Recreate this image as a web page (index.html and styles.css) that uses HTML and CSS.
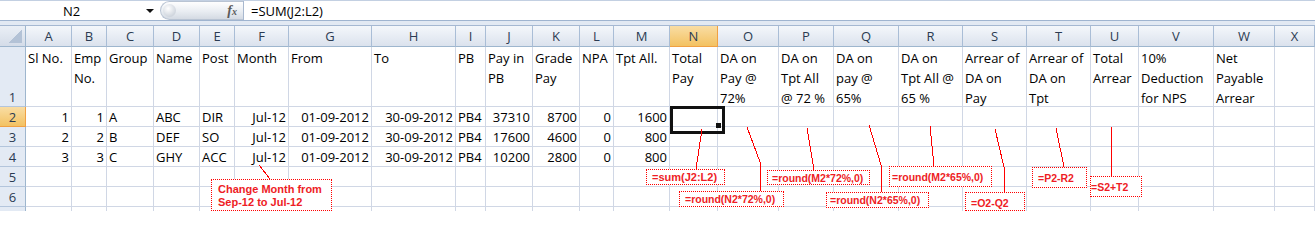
FILE: index.html
```html
<!DOCTYPE html>
<html lang="en">
  <head>
    <meta charset="UTF-8" />
    <title>DA Arrear Sheet</title>
    <link rel="stylesheet" href="styles.css">
  </head>
  <body>
    <div class="excel">
      <div class="fbar">
        <div class="namebox"><span class="nb-text">N2</span><i class="arrow"></i></div>
        <div class="fxbtn"><span class="dot"></span><span class="fx">f<small>x</small></span></div>
        <div class="formula">=SUM(J2:L2)</div>
      </div>
      <div class="band"></div>

      <div class="sheet">
        <!-- column headings -->
        <div class="corner"></div>
        <div class="ch">A</div><div class="ch">B</div><div class="ch">C</div><div class="ch">D</div>
        <div class="ch">E</div><div class="ch">F</div><div class="ch">G</div><div class="ch">H</div>
        <div class="ch">I</div><div class="ch">J</div><div class="ch">K</div><div class="ch">L</div>
        <div class="ch">M</div><div class="ch sel">N</div><div class="ch">O</div><div class="ch">P</div>
        <div class="ch">Q</div><div class="ch">R</div><div class="ch">S</div><div class="ch">T</div>
        <div class="ch">U</div><div class="ch">V</div><div class="ch">W</div><div class="ch">X</div>

        <!-- row 1 -->
        <div class="rh">1</div>
        <div class="hd">Sl No.</div>
        <div class="hd">Emp<br>No.</div>
        <div class="hd">Group</div>
        <div class="hd">Name</div>
        <div class="hd">Post</div>
        <div class="hd">Month</div>
        <div class="hd">From</div>
        <div class="hd">To</div>
        <div class="hd">PB</div>
        <div class="hd">Pay in<br>PB</div>
        <div class="hd">Grade<br>Pay</div>
        <div class="hd">NPA</div>
        <div class="hd">Tpt All.</div>
        <div class="hd">Total<br>Pay</div>
        <div class="hd">DA on<br>Pay @<br>72%</div>
        <div class="hd">DA on<br>Tpt All<br>@ 72 %</div>
        <div class="hd">DA on<br>pay @<br>65%</div>
        <div class="hd">DA on<br>Tpt All @<br>65 %</div>
        <div class="hd">Arrear of<br>DA on<br>Pay</div>
        <div class="hd">Arrear of<br>DA on<br>Tpt</div>
        <div class="hd">Total<br>Arrear</div>
        <div class="hd">10%<br>Deduction<br>for NPS</div>
        <div class="hd">Net<br>Payable<br>Arrear</div>
        <div class="hd"></div>

        <!-- row 2 -->
        <div class="rh sel">2</div>
        <div class="r">1</div><div class="r">1</div><div>A</div><div>ABC</div><div>DIR</div>
        <div class="r">Jul-12</div><div class="r">01-09-2012</div><div class="r">30-09-2012</div>
        <div>PB4</div><div class="r">37310</div><div class="r">8700</div><div class="r">0</div><div class="r">1600</div>
        <div class="active"></div>
        <div></div><div></div><div></div><div></div><div></div><div></div><div></div><div></div><div></div><div></div>

        <!-- row 3 -->
        <div class="rh">3</div>
        <div class="r">2</div><div class="r">2</div><div>B</div><div>DEF</div><div>SO</div>
        <div class="r">Jul-12</div><div class="r">01-09-2012</div><div class="r">30-09-2012</div>
        <div>PB4</div><div class="r">17600</div><div class="r">4600</div><div class="r">0</div><div class="r">800</div>
        <div></div>
        <div></div><div></div><div></div><div></div><div></div><div></div><div></div><div></div><div></div><div></div>

        <!-- row 4 -->
        <div class="rh">4</div>
        <div class="r">3</div><div class="r">3</div><div>C</div><div>GHY</div><div>ACC</div>
        <div class="r">Jul-12</div><div class="r">01-09-2012</div><div class="r">30-09-2012</div>
        <div>PB4</div><div class="r">10200</div><div class="r">2800</div><div class="r">0</div><div class="r">800</div>
        <div></div>
        <div></div><div></div><div></div><div></div><div></div><div></div><div></div><div></div><div></div><div></div>

        <!-- rows 5-7 empty -->
        <div class="rh">5</div>
        <div></div><div></div><div></div><div></div><div></div><div></div><div></div><div></div>
        <div></div><div></div><div></div><div></div><div></div><div></div><div></div><div></div>
        <div></div><div></div><div></div><div></div><div></div><div></div><div></div><div></div>

        <div class="rh">6</div>
        <div></div><div></div><div></div><div></div><div></div><div></div><div></div><div></div>
        <div></div><div></div><div></div><div></div><div></div><div></div><div></div><div></div>
        <div></div><div></div><div></div><div></div><div></div><div></div><div></div><div></div>

        <div class="rh"></div>
        <div></div><div></div><div></div><div></div><div></div><div></div><div></div><div></div>
        <div></div><div></div><div></div><div></div><div></div><div></div><div></div><div></div>
        <div></div><div></div><div></div><div></div><div></div><div></div><div></div><div></div>
      </div>

      <!-- callout leader lines -->
      <svg class="leaders" width="1315" height="241">
        <polyline points="259,165 270,179" />
        <polyline points="702,129 696,169" />
        <polyline points="747,127 760,162 761,191" />
        <polyline points="807,128 814,170" />
        <polyline points="869,125 881,165 881,192" />
        <polyline points="930,126 934,166" />
        <polyline points="995,129 1004,167 1004,192" />
        <polyline points="1056,128 1064,167" />
        <polyline points="1111.5,127 1111.5,176" />
      </svg>

      <div class="note n-month">Change Month from<br>Sep-12 to Jul-12</div>
      <div class="note n-sum">=sum(J2:L2)</div>
      <div class="note n-n72">=round(N2*72%,0)</div>
      <div class="note n-m72">=round(M2*72%,0)</div>
      <div class="note n-n65">=round(N2*65%,0)</div>
      <div class="note n-m65">=round(M2*65%,0)</div>
      <div class="note n-oq">=O2-Q2</div>
      <div class="note n-pr">=P2-R2</div>
      <div class="note n-st">=S2+T2</div>
    </div>
  </body>
</html>
```

FILE: styles.css
```css
* {
  box-sizing: border-box;
}
body {
  margin: 0;
  background: #fff;
  overflow: hidden;
  font-family: "Open Sans", sans-serif;
}
.excel {
  position: relative;
  width: 1315px;
  height: 241px;
}

/* formula bar */
.fbar {
  display: flex;
  height: 21px;
  border-top: 1px solid #c3d0e2;
  border-bottom: 1px solid #9fb4d0;
  font-size: 13px;
  color: #000;
}
.namebox {
  width: 160px;
  display: flex;
  align-items: center;
}
.nb-text {
  width: 143px;
  text-align: center;
  line-height: 19px;
  padding-top: 1px;
}
.arrow {
  width: 0;
  height: 0;
  margin-left: 3px;
  border-left: 4px solid transparent;
  border-right: 4px solid transparent;
  border-top: 4px solid #111;
}
.fxbtn {
  width: 83px;
  display: flex;
  align-items: center;
  justify-content: space-between;
  padding: 0 6px 0 2px;
  border-radius: 10px 0 0 10px;
  border: 1px solid #b9c4d3;
  border-right: none;
  background: linear-gradient(#fefefe, #e9edf2 55%, #d4dae3);
}
.dot {
  width: 13px;
  height: 13px;
  border-radius: 50%;
  background: radial-gradient(circle at 40% 35%, #ffffff, #d0d6de 70%, #b4bcc8);
}
.fx {
  font-family: "Liberation Serif", serif;
  font-style: italic;
  font-weight: bold;
  font-size: 14px;
  color: #5b5b5b;
}
.fx small {
  font-size: 10px;
}
.formula {
  flex: 1;
  border-left: 1px solid #a8b8cf;
  padding: 1px 0 0 7px;
  line-height: 19px;
}
.band {
  height: 5px;
  background: #e2e9f3;
  border-bottom: 1px solid #a5b8d2;
}

/* grid */
.sheet {
  display: grid;
  grid-template-columns: 26px 46px 35px 47px 46px 35px 54px 83px 84px 30px 47px 47px 34px 56px 48px 61px 55px 65px 64px 64px 64px 48px 75px 61px 1fr;
  grid-template-rows: 21px 60px repeat(6, 20px);
  height: 185px;
  overflow: hidden;
  font-size: 13px;
  color: #000;
}
.sheet > div {
  border-right: 1px solid #d0d7e5;
  border-bottom: 1px solid #d0d7e5;
  padding: 1px 2px 0;
  line-height: 18px;
  white-space: nowrap;
  min-width: 0;
}
.sheet > .r {
  text-align: right;
}
.sheet > .hd {
  line-height: 20px;
  padding-top: 1px;
}
.sheet > .corner {
  position: relative;
  background: linear-gradient(#eaeff6, #d4dce8);
  border-right: 1px solid #9eb6ce;
  border-bottom: 1px solid #9eb6ce;
}
.corner::after {
  content: "";
  position: absolute;
  right: 3px;
  bottom: 3px;
  width: 14px;
  height: 14px;
  background: linear-gradient(135deg, transparent 50%, #b3c2d6 50%);
}
.sheet > .ch {
  text-align: center;
  line-height: 19px;
  padding: 1px 0 0;
  color: #2b3b52;
  background: linear-gradient(#f4f7fb, #dbe2ed);
  border-right: 1px solid #a9bdd6;
  border-bottom: 1px solid #9eb6ce;
}
.sheet > .rh {
  display: flex;
  align-items: flex-end;
  justify-content: center;
  padding: 0;
  line-height: 18px;
  color: #2b3b52;
  background: #e3eaf4;
  border-right: 1px solid #9eb6ce;
  border-bottom: 1px solid #b3c5dc;
}
.sheet > .sel {
  background: linear-gradient(#f9dda4, #f3c262);
  border-right-color: #f0a043;
  border-bottom-color: #f0a043;
}
.sheet > .active {
  position: relative;
}
.active::after {
  content: "";
  position: absolute;
  left: 0;
  top: -1px;
  width: 49px;
  height: 22px;
  border: 3px solid #111;
}
.active::before {
  content: "";
  position: absolute;
  left: 46px;
  top: 16px;
  width: 5px;
  height: 5px;
  background: #111;
  z-index: 1;
}

/* callouts */
.leaders {
  position: absolute;
  left: 0;
  top: 0;
  fill: none;
  stroke: #f00;
  stroke-width: 1;
  shape-rendering: crispEdges;
}
.note {
  position: absolute;
  display: flex;
  align-items: center;
  border: 1px dotted #f00;
  background: #fff;
  color: #ee1c25;
  font: bold 10.5px "Liberation Sans", Arial, sans-serif;
  white-space: nowrap;
}
.n-month {
  left: 211px;
  top: 179px;
  width: 121px;
  height: 32px;
  align-items: flex-start;
  padding: 3px 0 0 6px;
  font-size: 11px;
  line-height: 13px;
}
.n-sum {
  left: 646px;
  top: 169px;
  width: 79px;
  height: 16px;
  padding-left: 5px;
  font-size: 11px;
}
.n-n72 {
  left: 679px;
  top: 191px;
  width: 105px;
  height: 16px;
  padding-left: 5px;
}
.n-m72 {
  left: 767px;
  top: 170px;
  width: 103px;
  height: 15px;
  padding-left: 4px;
}
.n-n65 {
  left: 826px;
  top: 192px;
  width: 103px;
  height: 16px;
  padding-left: 3px;
}
.n-m65 {
  left: 889px;
  top: 166px;
  width: 103px;
  height: 21px;
  padding-left: 2px;
}
.n-oq {
  left: 965px;
  top: 192px;
  width: 60px;
  height: 19px;
  padding: 2px 0 0 5px;
}
.n-pr {
  left: 1032px;
  top: 167px;
  width: 55px;
  height: 21px;
  padding-left: 5px;
}
.n-st {
  left: 1090px;
  top: 176px;
  width: 52px;
  height: 21px;
  padding-left: 0;
}
```
